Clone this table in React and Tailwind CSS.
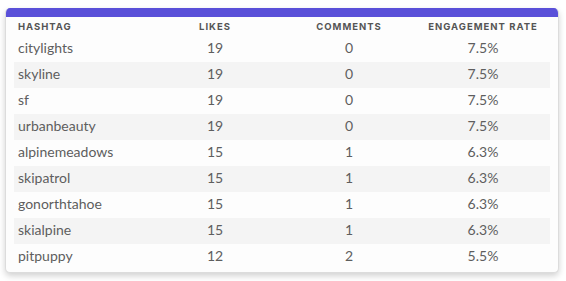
import React from "react";

const rows = [
  ["citylights", 19, 0, "7.5%"],
  ["skyline", 19, 0, "7.5%"],
  ["sf", 19, 0, "7.5%"],
  ["urbanbeauty", 19, 0, "7.5%"],
  ["alpinemeadows", 15, 1, "6.3%"],
  ["skipatrol", 15, 1, "6.3%"],
  ["gonorthtahoe", 15, 1, "6.3%"],
  ["skialpine", 15, 1, "6.3%"],
  ["pitpuppy", 12, 2, "5.5%"],
];

export default function App() {
  return (
    <div className="w-[566px] h-[281px] bg-white pt-[8px] px-[5px] font-['Lato',sans-serif]">
      <div className="w-[554px] h-[265px] rounded-[5px] bg-[#fdfdfd] border-x border-b border-[#dcdcdc] shadow-[0_3px_6px_rgba(0,0,0,0.18)] overflow-hidden">
        <div className="h-[9px] bg-[#5a50d9]" />
        <div className="px-[8px]">
          <div className="grid grid-cols-4 h-[19px] items-end pb-[2px] text-[9.5px] font-bold tracking-[1px] text-[#555] font-['Inter',sans-serif]">
            <div className="pl-[4px]">HASHTAG</div>
            <div className="text-center">LIKES</div>
            <div className="text-center">COMMENTS</div>
            <div className="text-center">ENGAGEMENT RATE</div>
          </div>
          {rows.map((r, i) => (
            <div
              key={r[0]}
              className={`grid grid-cols-4 h-[26px] items-center pb-[3px] text-[14px] text-[#5e5e5e] ${i % 2 === 1 ? "bg-[#f4f4f4]" : ""}`}
            >
              <div className="pl-[4px]">{r[0]}</div>
              <div className="text-center">{r[1]}</div>
              <div className="text-center">{r[2]}</div>
              <div className="text-center">{r[3]}</div>
            </div>
          ))}
        </div>
      </div>
    </div>
  );
}
